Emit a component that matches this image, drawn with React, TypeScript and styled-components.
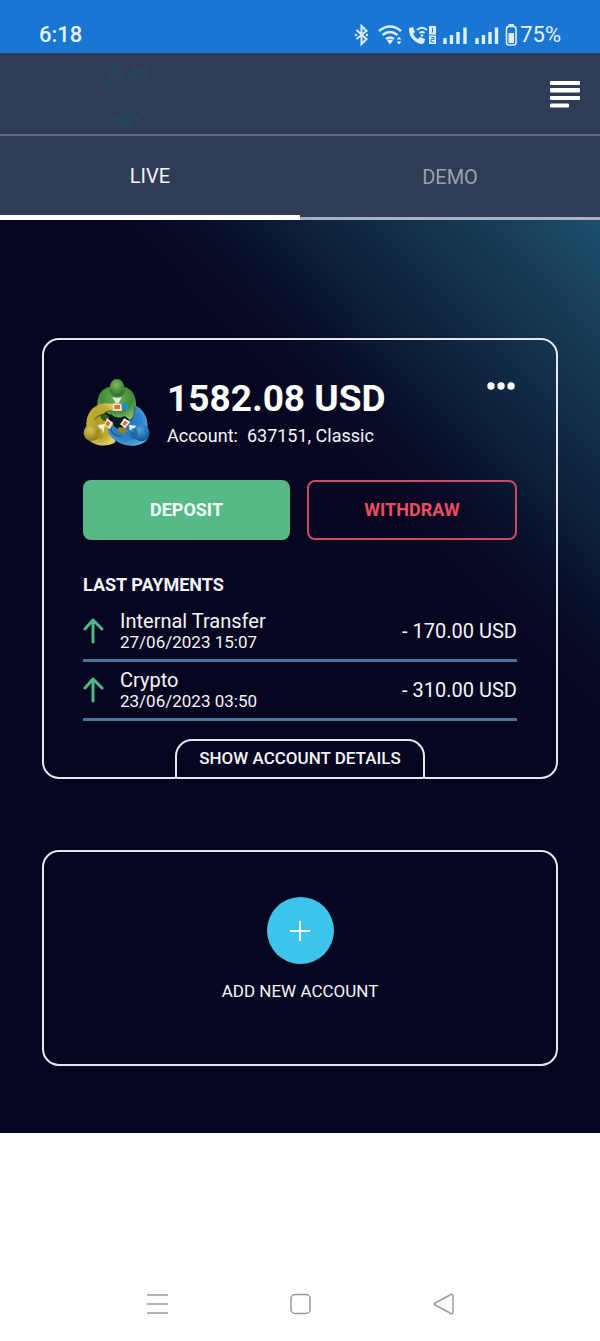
import React, { useState } from "react";
import styled, { createGlobalStyle } from "styled-components";

const GlobalStyle = createGlobalStyle`
  *, *::before, *::after { box-sizing: border-box; }
  body {
    margin: 0;
    background: #ffffff;
    color: #f4f5fa;
    font-family: Roboto, "Liberation Sans", sans-serif;
  }
  button { font-family: inherit; cursor: pointer; }
`;

const Screen = styled.div`
  display: flex;
  flex-direction: column;
  min-height: 100vh;
`;

const StatusBar = styled.div`
  display: flex;
  align-items: flex-end;
  justify-content: space-between;
  height: 53px;
  padding: 0 39px 5px;
  background: #1976d2;
  color: #e4f3ff;
`;

const Clock = styled.span`
  font-size: 22px;
  line-height: 26px;
  font-weight: 500;
`;

const StatusIcons = styled.div`
  display: flex;
  align-items: center;
`;

const BatteryText = styled.span`
  font-size: 22px;
  line-height: 26px;
`;

const Header = styled.header`
  display: flex;
  align-items: center;
  justify-content: space-between;
  height: 83px;
  padding: 0 19px 0 99px;
  background: #303b55;
  border-bottom: 2px solid #626b86;
`;

const IconButton = styled.button`
  display: flex;
  padding: 0;
  border: 0;
  background: none;
  color: #ffffff;
`;

const Tabs = styled.div`
  display: grid;
  grid-template-columns: 1fr 1fr;
  height: 84px;
  background: #303b55;
`;

const Tab = styled.button<{ $active: boolean }>`
  padding: 0;
  border: 0;
  border-bottom: ${(p) => (p.$active ? "5px solid #ffffff" : "3px solid #a9b2c0")};
  background: none;
  color: ${(p) => (p.$active ? "#f4f5fa" : "#9ba1b0")};
  font-size: 20px;
  line-height: 24px;
`;

const Main = styled.main`
  display: flex;
  flex-direction: column;
  gap: 71px;
  padding: 118px 42px 67px;
  background: linear-gradient(226deg, #1d4f6c 0, #183f5a 70px, #13304a 140px, #0d1f39 220px, #080d28 290px, #070620 350px);
`;

const cardFrame = `
  border: 2px solid #e6e6f0;
  border-radius: 17px;
`;

const AccountCard = styled.section`
  ${cardFrame}
  display: flex;
  flex-direction: column;
  padding: 38px 39px 0;
`;

const Summary = styled.div`
  display: flex;
  gap: 16px;
`;

const SummaryText = styled.div`
  flex: 1;
`;

const Balance = styled.h1`
  margin: 0;
  color: #ffffff;
  font-size: 37px;
  line-height: 42px;
  font-weight: 700;
`;

const AccountLine = styled.p`
  margin: 4px 0 0;
  font-size: 18px;
  line-height: 24px;
  white-space: pre;
`;

const MoreButton = styled(IconButton)`
  align-self: flex-start;
  padding: 4px 2px;
`;

const Actions = styled.div`
  display: grid;
  grid-template-columns: 69fr 70fr;
  gap: 17px;
  margin-top: 32px;
`;

const Action = styled.button<{ $filled?: boolean }>`
  height: 60px;
  border: 2px solid ${(p) => (p.$filled ? "#57b888" : "#cc4a63")};
  border-radius: 8px;
  background: ${(p) => (p.$filled ? "#57b888" : "transparent")};
  color: ${(p) => (p.$filled ? "#effff6" : "#e9505f")};
  font-size: 18px;
  line-height: 24px;
  font-weight: 700;
`;

const SectionTitle = styled.h2`
  margin: 33px 0 0;
  font-size: 18px;
  line-height: 24px;
  font-weight: 700;
`;

const Payments = styled.ul`
  margin: 6px 0 0;
  padding: 0;
  list-style: none;
`;

const Payment = styled.li`
  display: flex;
  align-items: center;
  gap: 16px;
  height: 59px;
  padding-bottom: 1px;
  border-bottom: 3px solid #4c759e;
`;

const PaymentInfo = styled.div`
  display: flex;
  flex: 1;
  flex-direction: column;
`;

const PaymentName = styled.span`
  font-size: 20px;
  line-height: 22px;
`;

const PaymentDate = styled.time`
  font-size: 17px;
  line-height: 20px;
`;

const Amount = styled.span`
  font-size: 20px;
  line-height: 24px;
`;

const DetailsButton = styled.button`
  align-self: center;
  height: 38px;
  margin-top: 18px;
  padding: 0 22px 2px;
  border: 2px solid #e6e6f0;
  border-bottom: 0;
  border-radius: 17px 17px 0 0;
  background: none;
  color: #f4f5fa;
  font-size: 17px;
  line-height: 24px;
  font-weight: 500;
`;

const AddCard = styled.button`
  ${cardFrame}
  display: flex;
  flex-direction: column;
  align-items: center;
  gap: 15px;
  padding: 45px 0 61px;
  background: none;
  color: #f4f5fa;
  font-size: 17px;
  line-height: 24px;
`;

const PlusDisc = styled.span`
  display: flex;
  align-items: center;
  justify-content: center;
  width: 67px;
  height: 67px;
  border-radius: 50%;
  background: #3dc4ea;
`;

const SystemNav = styled.nav`
  display: flex;
  flex: 1;
  align-items: flex-end;
  justify-content: space-between;
  min-height: 120px;
  padding: 0 145px 25px;
`;

const NavButton = styled(IconButton)`
  color: #999999;
`;

const StatusGlyphs = () => (
  <svg width="166" height="26" viewBox="0 0 166 26" fill="none" stroke="#dcefff" aria-hidden="true">
    <path d="M2.500 8l10 9-5 5V4l5 5-10 8" strokeWidth="2" />
    <circle cx="2" cy="13" r="1.200" fill="#dcefff" stroke="none" />
    <circle cx="13" cy="13" r="1.200" fill="#dcefff" stroke="none" />
    <path d="M25 9q11-9 22 0M28.500 13q7.500-6 15 0M32 17q4-3 8 0" strokeWidth="2.400" />
    <path d="M33 18.500l3 4 3-4q-3-2-6 0z" fill="#dcefff" stroke="none" />
    <path d="M42.500 17.500l2.500-3 2.500 3zM42.500 19.500l2.500 3 2.500-3z" fill="#dcefff" stroke="none" />
    <path d="M55 6l4-1 2 5-2 2q2 4 5 5l2-2 5 2-1 4q-2 2-6 0-8-4-9-12z" fill="#dcefff" stroke="none" />
    <path d="M63 8q5-4.500 10 0M65.500 11q2.500-2 5 0" strokeWidth="1.800" />
    <circle cx="68" cy="13.500" r="1.300" fill="#dcefff" stroke="none" />
    <path d="M75 4h7v8.500h-7zM75 13.500h7v8.500h-7z" fill="#dcefff" stroke="none" />
    <path d="M78.500 6v4.500M77 15.500h3v2h-3v2.500h3" stroke="#1976d2" />
    <path d="M91 22v-6M97.500 22v-9M104 22v-12M111 22v-16.500M123 22v-6M129.500 22v-9M136 22v-12M142.500 22v-16.500" strokeWidth="3.400" />
    <rect x="152.500" y="4.500" width="9.500" height="18.500" rx="2.500" strokeWidth="1.600" />
    <path d="M154.500 11h5.500v10h-5.500z" fill="#dcefff" stroke="none" />
    <path d="M154.500 3h5.500" strokeWidth="2" />
  </svg>
);

const BrandMark = () => (
  <svg width="54" height="70" viewBox="0 0 54 70" fill="none" stroke="#27475a" aria-hidden="true">
    <path d="M17 2L7 23 3 38l7 18 13 12h6l13-12 8-18-4-15-8-16-9 13-3 9-4-10z" strokeWidth="4" strokeDasharray="7 2" opacity="0.600" />
    <path d="M16 5l8 13-6-1-7 6zM30 13l2 10M36 10v9M41 9v10M46 8v9" strokeWidth="4" opacity="0.800" />
    <path d="M11 26l12 12M43 26L31 38M8 40l12 12M46 40L34 52" strokeWidth="4" opacity="0.400" />
    <path d="M18 58l6-2 3 3 4-3 5 2-8 8z" strokeWidth="4" opacity="0.900" />
  </svg>
);

const MenuIcon = () => (
  <svg width="32" height="28" viewBox="0 0 32 28" fill="#ffffff" aria-hidden="true">
    <rect x="1" y="1" width="30" height="4" rx="1" />
    <rect x="1" y="8" width="30" height="4.500" rx="1" />
    <rect x="1" y="16" width="30" height="4" rx="1" />
    <rect x="1" y="23.500" width="19" height="4" rx="1" />
  </svg>
);

const PlatformLogo = () => (
  <svg width="68" height="70" viewBox="38 40 204 210" aria-hidden="true">
    <defs>
      <radialGradient id="green" cx="50%" cy="30%" r="70%">
        <stop offset="0" stopColor="#70b04d" />
        <stop offset="0.600" stopColor="#408a37" />
        <stop offset="1" stopColor="#8cc071" />
      </radialGradient>
      <radialGradient id="greenHead" cx="45%" cy="35%" r="65%">
        <stop offset="0" stopColor="#7fc057" />
        <stop offset="1" stopColor="#2d722f" />
      </radialGradient>
      <radialGradient id="gold" cx="45%" cy="45%" r="60%">
        <stop offset="0" stopColor="#b19d1f" />
        <stop offset="0.700" stopColor="#bfae35" />
        <stop offset="1" stopColor="#ddd268" />
      </radialGradient>
      <radialGradient id="goldHead" cx="40%" cy="30%" r="70%">
        <stop offset="0" stopColor="#d6c652" />
        <stop offset="1" stopColor="#8d791a" />
      </radialGradient>
      <radialGradient id="blue" cx="45%" cy="45%" r="60%">
        <stop offset="0" stopColor="#1e6fb5" />
        <stop offset="0.700" stopColor="#2f86cb" />
        <stop offset="1" stopColor="#64a8da" />
      </radialGradient>
      <radialGradient id="blueHead" cx="40%" cy="30%" r="70%">
        <stop offset="0" stopColor="#4ba4e0" />
        <stop offset="1" stopColor="#135493" />
      </radialGradient>
    </defs>
    <path d="M82 130C78 95 92 70 120 66h38c28 4 40 28 39 58-1 22-5 36-15 45l-18-14c-8 7-25 7-36 0z" fill="url(#green)" />
    <path d="M48 188c-2-40 17-68 56-72l24 1v22c-15 0-24 4-28 12l27 25 8 25v32c-25 16-63 11-78-6z" fill="url(#gold)" />
    <path d="M192 122c23 7 40 31 40 65v35c-15 24-55 26-84 13-22-10-34-24-36-44l15-9 22 15c12-4 12-16 15-26l23-10c6-10 8-22 5-39z" fill="url(#blue)" />
    <path d="M126 138q-20 0-28 12-18 3-25 15M193 125q0 32-14 44M119 190q6 23 36 26" fill="none" stroke="#1b3e2c" strokeWidth="4" opacity="0.500" />
    <path d="M120 143c6 17 30 19 46 10l-18 34-17-2z" fill="#0b1824" />
    <path d="M89 151q17-9 28 5l-5 12q-18 6-23-17z" fill="#315b20" />
    <path d="M145 187l20 2 7 12-13 8-18-10z" fill="#8d8234" />
    <path d="M155 114l18 1v20l-15 2z" fill="#248fc4" />
    <path d="M126 98h29l-11 18h-7z" fill="#dff1d5" />
    <path d="M128 116l25 1 2 22-27-1z" fill="#f6e8d3" />
    <path d="M132 121h17v12h-17z" fill="#e46c39" />
    <path d="M83 181l21-3-4 25-6 7z" fill="#f0efd2" />
    <path d="M176 180l22 3-12 20-8-7z" fill="#d8edfa" />
    <path d="M110 160l18 14-10 20-16-13z" fill="#f6e8d3" />
    <path d="M111 168l9 7-6 11-9-7z" fill="#e46c39" />
    <path d="M162 160l18 12-16 19-15-12z" fill="#f6e8d3" />
    <path d="M164 168l8 6-9 10-7-6z" fill="#e46c39" />
    <path d="M117 76q3 22 24 23 21-1 25-23" fill="#388337" />
    <ellipse cx="140" cy="68" rx="22" ry="25" fill="url(#greenHead)" />
    <circle cx="64" cy="205" r="24" fill="url(#goldHead)" />
    <ellipse cx="87" cy="207" rx="12" ry="17" fill="#a28b21" opacity="0.700" />
    <circle cx="213" cy="205" r="25" fill="url(#blueHead)" />
    <ellipse cx="190" cy="207" rx="12" ry="17" fill="#1963a5" opacity="0.700" />
  </svg>
);

const ArrowUp = () => (
  <svg width="21" height="26" viewBox="0 0 21 26" fill="none" stroke="#4fb584" strokeWidth="3" strokeLinecap="round" strokeLinejoin="round" aria-hidden="true">
    <path d="M10 24V2M2 11l8-9 9 9" />
  </svg>
);

const payments = [
  { name: "Internal Transfer", date: "27/06/2023 15:07", amount: "- 170.00 USD" },
  { name: "Crypto", date: "23/06/2023 03:50", amount: "- 310.00 USD" },
];

export default function App() {
  const [tab, setTab] = useState("LIVE");
  return (
    <Screen>
      <GlobalStyle />
      <StatusBar>
        <Clock>6:18</Clock>
        <StatusIcons>
          <StatusGlyphs />
          <BatteryText>75%</BatteryText>
        </StatusIcons>
      </StatusBar>
      <Header>
        <BrandMark />
        <IconButton aria-label="Menu">
          <MenuIcon />
        </IconButton>
      </Header>
      <Tabs role="tablist">
        {["LIVE", "DEMO"].map((name) => (
          <Tab key={name} role="tab" aria-selected={tab === name} $active={tab === name} onClick={() => setTab(name)}>
            {name}
          </Tab>
        ))}
      </Tabs>
      <Main>
        <AccountCard>
          <Summary>
            <PlatformLogo />
            <SummaryText>
              <Balance>1582.08 USD</Balance>
              <AccountLine>{"Account:  637151, Classic"}</AccountLine>
            </SummaryText>
            <MoreButton aria-label="More options">
              <svg width="28" height="8" viewBox="0 0 28 8" fill="currentColor">
                <circle cx="4" cy="4" r="3.700" />
                <circle cx="14" cy="4" r="3.700" />
                <circle cx="24" cy="4" r="3.700" />
              </svg>
            </MoreButton>
          </Summary>
          <Actions>
            <Action $filled>DEPOSIT</Action>
            <Action>WITHDRAW</Action>
          </Actions>
          <SectionTitle>LAST PAYMENTS</SectionTitle>
          <Payments>
            {payments.map((p) => (
              <Payment key={p.date}>
                <ArrowUp />
                <PaymentInfo>
                  <PaymentName>{p.name}</PaymentName>
                  <PaymentDate>{p.date}</PaymentDate>
                </PaymentInfo>
                <Amount>{p.amount}</Amount>
              </Payment>
            ))}
          </Payments>
          <DetailsButton>SHOW ACCOUNT DETAILS</DetailsButton>
        </AccountCard>
        <AddCard>
          <PlusDisc>
            <svg width="22" height="22" viewBox="0 0 22 22" stroke="#f2fcff" strokeWidth="2" aria-hidden="true">
              <path d="M11 1v20M1 11h20" />
            </svg>
          </PlusDisc>
          ADD NEW ACCOUNT
        </AddCard>
      </Main>
      <SystemNav>
        <NavButton aria-label="Recent apps">
          <svg width="24" height="24" viewBox="0 0 24 24" fill="none" stroke="currentColor" strokeWidth="1.500">
            <path d="M2 3h21M2 12h21M2 21h21" />
          </svg>
        </NavButton>
        <NavButton aria-label="Home">
          <svg width="24" height="24" viewBox="0 0 24 24" fill="none" stroke="currentColor" strokeWidth="1.500">
            <rect x="3" y="2.500" width="19" height="19" rx="4" />
          </svg>
        </NavButton>
        <NavButton aria-label="Back">
          <svg width="24" height="24" viewBox="0 0 24 24" fill="none" stroke="currentColor" strokeWidth="1.500" strokeLinejoin="round">
            <path d="M20 2.500Q22 1.700 22 4v16q0 2.300-2 1.500L4 13q-1.500-1 0-2z" />
          </svg>
        </NavButton>
      </SystemNav>
    </Screen>
  );
}
